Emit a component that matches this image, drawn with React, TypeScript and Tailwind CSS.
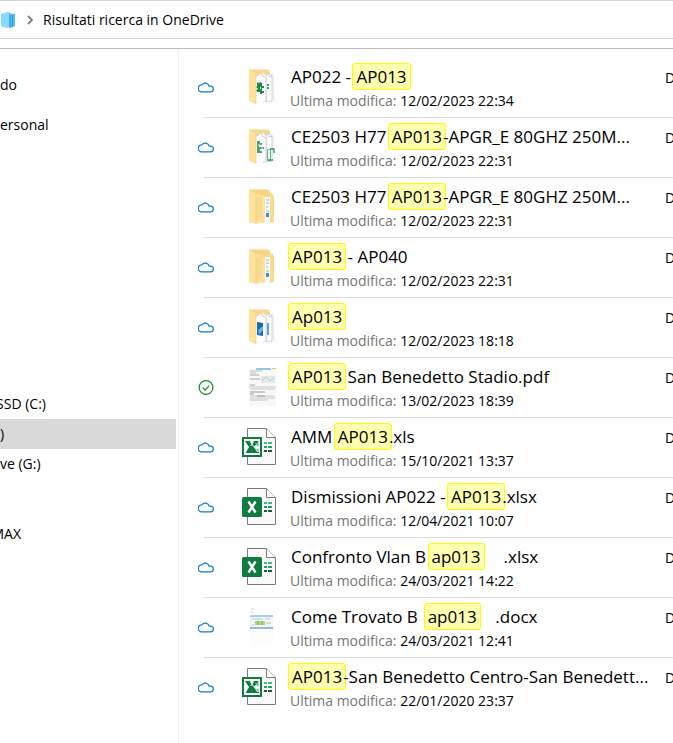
import type { ReactNode } from "react";

type IconKind =
  | "folder-sheets"
  | "folder-charts"
  | "folder-closed"
  | "folder-photo"
  | "pdf"
  | "xls"
  | "xlsx"
  | "docx";

type Item = {
  before?: string;
  match: string;
  after?: string;
  date: string;
  icon: IconKind;
  synced?: boolean;
};

const items: Item[] = [
  { before: "AP022 - ", match: "AP013", date: "12/02/2023 22:34", icon: "folder-sheets" },
  { before: "CE2503 H77 ", match: "AP013", after: "-APGR_E 80GHZ 250M...", date: "12/02/2023 22:31", icon: "folder-charts" },
  { before: "CE2503 H77 ", match: "AP013", after: "-APGR_E 80GHZ 250M...", date: "12/02/2023 22:31", icon: "folder-closed" },
  { match: "AP013", after: " - AP040", date: "12/02/2023 22:31", icon: "folder-closed" },
  { match: "Ap013", date: "12/02/2023 18:18", icon: "folder-photo" },
  { match: "AP013", after: " San Benedetto Stadio.pdf", date: "13/02/2023 18:39", icon: "pdf", synced: true },
  { before: "AMM ", match: "AP013", after: ".xls", date: "15/10/2021 13:37", icon: "xls" },
  { before: "Dismissioni AP022 - ", match: "AP013", after: ".xlsx", date: "12/04/2021 10:07", icon: "xlsx" },
  { before: "Confronto Vlan B ", match: "ap013", after: "     .xlsx", date: "24/03/2021 14:22", icon: "xlsx" },
  { before: "Come Trovato B  ", match: "ap013", after: "    .docx", date: "24/03/2021 12:41", icon: "docx" },
  { match: "AP013", after: "-San Benedetto Centro-San Benedett...", date: "22/01/2020 23:37", icon: "xls" },
];

function Cloud() {
  return (
    <svg width="16" height="16" viewBox="0 0 16 16" fill="none" stroke="#0f7ad8" strokeWidth="1.3" strokeLinejoin="round">
      <path d="M3.6 12.9h8.600a2.900 2.900 0 0 0 .4-5.800c-.5-.1-.9-.1-1.500.1A4 4 0 0 0 3.900 5.900a3.500 3.500 0 0 0-.3 7Z" />
    </svg>
  );
}

function Check() {
  return (
    <svg width="16" height="16" viewBox="0 0 16 16" fill="none" stroke="#1f8f3a" strokeWidth="1.3">
      <circle cx="8" cy="8.5" r="6.9" />
      <path d="m4.8 8.7 2.3 2.3 4.2-4.4" />
    </svg>
  );
}

function OpenFolder({ children }: { children: ReactNode }) {
  return (
    <svg width="28" height="36" viewBox="0 0 28 36">
      <path d="M0 .5h19l2 1.5v5H0Z" fill="#f8d88a" />
      <path d="M22 5l3-1 1 27h2v1l-6 1Z" fill="#f3f3f4" />
      <path d="M17 7l3-3 3 3v25l-6 1Z" fill="#fff" stroke="#c4c4c7" strokeWidth=".7" />
      <path d="M7 7l6-4 4 4v25l-3 2-7-1Z" fill="#fff" />
      <path d="M7.5 7 13 3.5v3.5l4 1.5v23.500l-3 1.500" fill="none" stroke="#bcbcc0" strokeWidth=".7" />
      <path d="M20 4v3.500h3" fill="none" stroke="#bcbcc0" strokeWidth=".7" />
      {children}
      <path d="M0 .5l7 5v29.500l-7-3Z" fill="#ffe19b" />
      <path d="M7 5.500v29" stroke="#efd083" strokeWidth=".7" />
    </svg>
  );
}

function ClosedFolder() {
  return (
    <svg width="28" height="36" viewBox="0 0 28 36">
      <path d="M0 .5h19l2 2v4l4 1v25l-2 1H0Z" fill="#f5d582" />
      <path d="M15 8h6v26h-6Z" fill="#f6f9fc" />
      <path d="M17 11h3M17 14h3M17 18h2M17 22h3" stroke="#8dbce4" />
      <path d="M17 24h3v4h-3z" fill="#3f8dd2" />
      <path d="M21 4l3 1v20l1 1v6l-4 1Z" fill="#fbdc8c" />
      <path d="M0 .5 7 5l9 2v26l-9 2-7-3Z" fill="#ffe29d" />
      <path d="M7 9l6-3v22l-6 5Z" fill="#f8d98d" />
      <path d="M7 5.500v29" stroke="#efd083" strokeWidth=".7" />
    </svg>
  );
}

function PdfPage() {
  return (
    <svg width="28" height="40" viewBox="0 0 28 40">
      <path d="M0 1h27v38H0Z" fill="#f8f8f9" />
      <path d="M7 1h15v2H7z" fill="#8ecbe4" />
      <path d="M23 1h4v1h-4z" fill="#f2c66b" />
      <path d="M1 4h12M1 6h6" stroke="#bcc0c6" />
      <path d="M12 9h14v7H12z" fill="#e3e8ea" />
      <path d="m13 14 4-4 4 4 4-3" fill="none" stroke="#b9c3c5" strokeWidth=".8" />
      <path d="M1 8h9M1 12h10M1 18h5" stroke="#a5a7ab" />
      <path d="M0 20h27M1 22h25M1 29h24M1 31h25M1 33h18" stroke="#c6c7ca" />
      <path d="M1 25h15M1 27h4M8 29h8" stroke="#999b9f" />
    </svg>
  );
}

function DocxPage() {
  return (
    <svg width="28" height="40" viewBox="0 0 28 40">
      <path d="M1 1h24v38H1Z" fill="#fdfdfd" />
      <path d="M2 2h3M2 5h2" stroke="#c8ccd2" />
      <path d="M1 8h23v2H1z" fill="#a9cdee" />
      <path d="M1 10h23v10H1z" fill="#f1f5f8" />
      <path d="M3 12h10M16 12h5M3 18h2" stroke="#c3ccd5" />
      <path d="M6 14h10v4H6z" fill="#afd388" />
      <path d="M9 14v4M13 14v4" stroke="#86b360" />
      <path d="M17 16h5" stroke="#b9c2a4" />
      <path d="M1 20h23v2H1z" fill="#9ab7d4" />
    </svg>
  );
}

function ExcelFile({ legacy }: { legacy?: boolean }) {
  return (
    <svg width="36" height="40" viewBox="0 0 36 40">
      <path d="M6.5 1.5h19l9 9v27h-28Z" fill="#fafafa" stroke="#7a7a7a" />
      <path d="M25.5 1.5v9h9" fill="#fff" stroke="#7a7a7a" />
      <path d="M23 15h3v2h-3zM27 15h4v2h-4z" fill="#33c481" />
      <path d="M23 19h3v2h-3zM27 19h4v2h-4z" fill="#21a366" />
      <path d="M23 23h3v2h-3zM27 23h4v2h-4z" fill="#185c37" />
      {legacy ? (
        <>
          <path d="M2 11h18v18H2Z" fill="#fff" stroke="#107c41" strokeWidth="2" />
          <path d="M13 14h5l-5 6 5 5v1h-5L4.500 26 8 20Z" fill="#107c41" />
          <path d="M4 14h5l8.500 12H12Z" fill="#107c41" />
          <path d="m14 16 3.500 4v-4ZM14 24l3.500-3v4Z" fill="#6fb18c" />
          <path d="m9 14.500 8 10.500M12.500 15 9.500 19" stroke="#fff" strokeWidth=".9" />
        </>
      ) : (
        <>
          <rect x="1" y="10" width="20" height="20" rx="1.5" fill="#107c41" />
          <path d="m7.5 14.500 7 11M14.500 14.500l-7 11" stroke="#fff" strokeWidth="2.4" />
        </>
      )}
    </svg>
  );
}

function FileIcon({ kind }: { kind: IconKind }) {
  switch (kind) {
    case "folder-sheets":
      return (
        <OpenFolder>
          <path d="M8 13l2 1 1-1 2 1v3h2v2h-2v3h2v2h-2v1h-2v-2H8l-1-2 2-1-2-2 1-1Z" fill="#1f8a50" />
          <path d="M11 18h1v2h-1z" fill="#d5eadd" />
          <path d="M18 15h2v2h-2zM18 18h2v2h-2z" fill="#3b9d68" />
        </OpenFolder>
      );
    case "folder-charts":
      return (
        <OpenFolder>
          <path d="M8 12h3v2h2v2h-3v2h5v2h-4v2h2v2H8Z" fill="#4ba474" />
          <path d="M9 16h2M12 19h2" stroke="#d5eadd" />
          <path d="M18.5 20.500h3v11h-3z" fill="#e6f4ec" stroke="#4ba474" strokeWidth=".8" />
          <path d="M21 20h4v4M19 31h5" fill="none" stroke="#3b9d68" strokeWidth="1.4" />
        </OpenFolder>
      );
    case "folder-photo":
      return (
        <OpenFolder>
          <path d="M8 13l6 1v13l-6-1Z" fill="#1768b3" />
          <path d="M9 21l5-4v4l-4 5Z" fill="#5fb2ee" />
          <path d="M18 14h2v12h-2z" fill="#5ba4dc" />
        </OpenFolder>
      );
    case "folder-closed":
      return <ClosedFolder />;
    case "pdf":
      return <PdfPage />;
    case "docx":
      return <DocxPage />;
    default:
      return <ExcelFile legacy={kind === "xls"} />;
  }
}

function Row({ item }: { item: Item }) {
  return (
    <li className="ml-[25px] flex h-[60px] border-b border-[#dadada] last:border-b-0">
      <div className="-ml-[6px] flex w-4 shrink-0 items-center justify-center pb-[2px]">
        {item.synced ? <Check /> : <Cloud />}
      </div>
      <div className="ml-[27px] flex w-9 shrink-0 items-center justify-end pb-[2px]">
        <FileIcon kind={item.icon} />
      </div>
      <div className="ml-[13px] min-w-0 grow pt-[5px]">
        <p className="whitespace-pre pl-px text-[17px] leading-[28px]">
          {item.before}
          <mark className="-mx-[3px] rounded-[3px] border border-[#fffb00] bg-[#ffffb0] px-[3px] py-px text-black">
            {item.match}
          </mark>
          {item.after}
        </p>
        <p className="whitespace-nowrap text-sm text-[#767676]">
          Ultima modifica: <span className="text-black">{item.date}</span>
        </p>
      </div>
      <div className="w-2 shrink-0 overflow-hidden pt-[10px] text-sm">D</div>
    </li>
  );
}

function NavItem({ children, className }: { children: ReactNode; className?: string }) {
  return (
    <a href="#" className="flex h-[30px] w-44 items-center overflow-hidden whitespace-nowrap">
      <span className={className}>{children}</span>
    </a>
  );
}

export default function App() {
  return (
    <div className="flex min-h-screen flex-col overflow-hidden bg-white font-['Open_Sans',sans-serif] text-sm text-black">
      <header className="flex h-[39px] items-center border-y border-[#d5d5d5]">
        <svg width="16" height="18" viewBox="0 0 16 18" className="shrink-0">
          <path d="M1 3l7-2 2 1v14l-3 1-6-2Z" fill="#86d8fd" />
          <path d="M7 2l8 1v12l-6 2V3Z" fill="#55bff5" />
          <path d="M10 4v13M12.5 4v12" stroke="#2a9be2" />
        </svg>
        <svg width="8" height="10" viewBox="0 0 8 10" className="ml-[10px] shrink-0" fill="none" stroke="#808080" strokeWidth="1.8">
          <path d="m2 1 4 4-4 4" />
        </svg>
        <span className="ml-[9px] whitespace-nowrap">Risultati ricerca in OneDrive</span>
      </header>
      <div className="mt-[9px] flex grow border-t border-[#bdbdbd]">
        <nav className="w-[179px] shrink-0 overflow-hidden border-r border-[#f0f0f0] pt-[21px]">
          <NavItem>do</NavItem>
          <div className="mt-[10px]">
            <NavItem>ersonal</NavItem>
          </div>
          <div className="mt-[249px]">
            <NavItem className="flex w-[46px] justify-end">SSD (C:)</NavItem>
            <div className="w-44 bg-[#d9d9d9]">
              <NavItem>)</NavItem>
            </div>
            <NavItem>ve (G:)</NavItem>
          </div>
          <div className="mt-10">
            <NavItem className="flex w-[21px] justify-end">MAX</NavItem>
          </div>
        </nav>
        <ul className="min-w-0 grow pt-[9px]">
          {items.map((item, i) => (
            <Row key={i} item={item} />
          ))}
        </ul>
      </div>
    </div>
  );
}
